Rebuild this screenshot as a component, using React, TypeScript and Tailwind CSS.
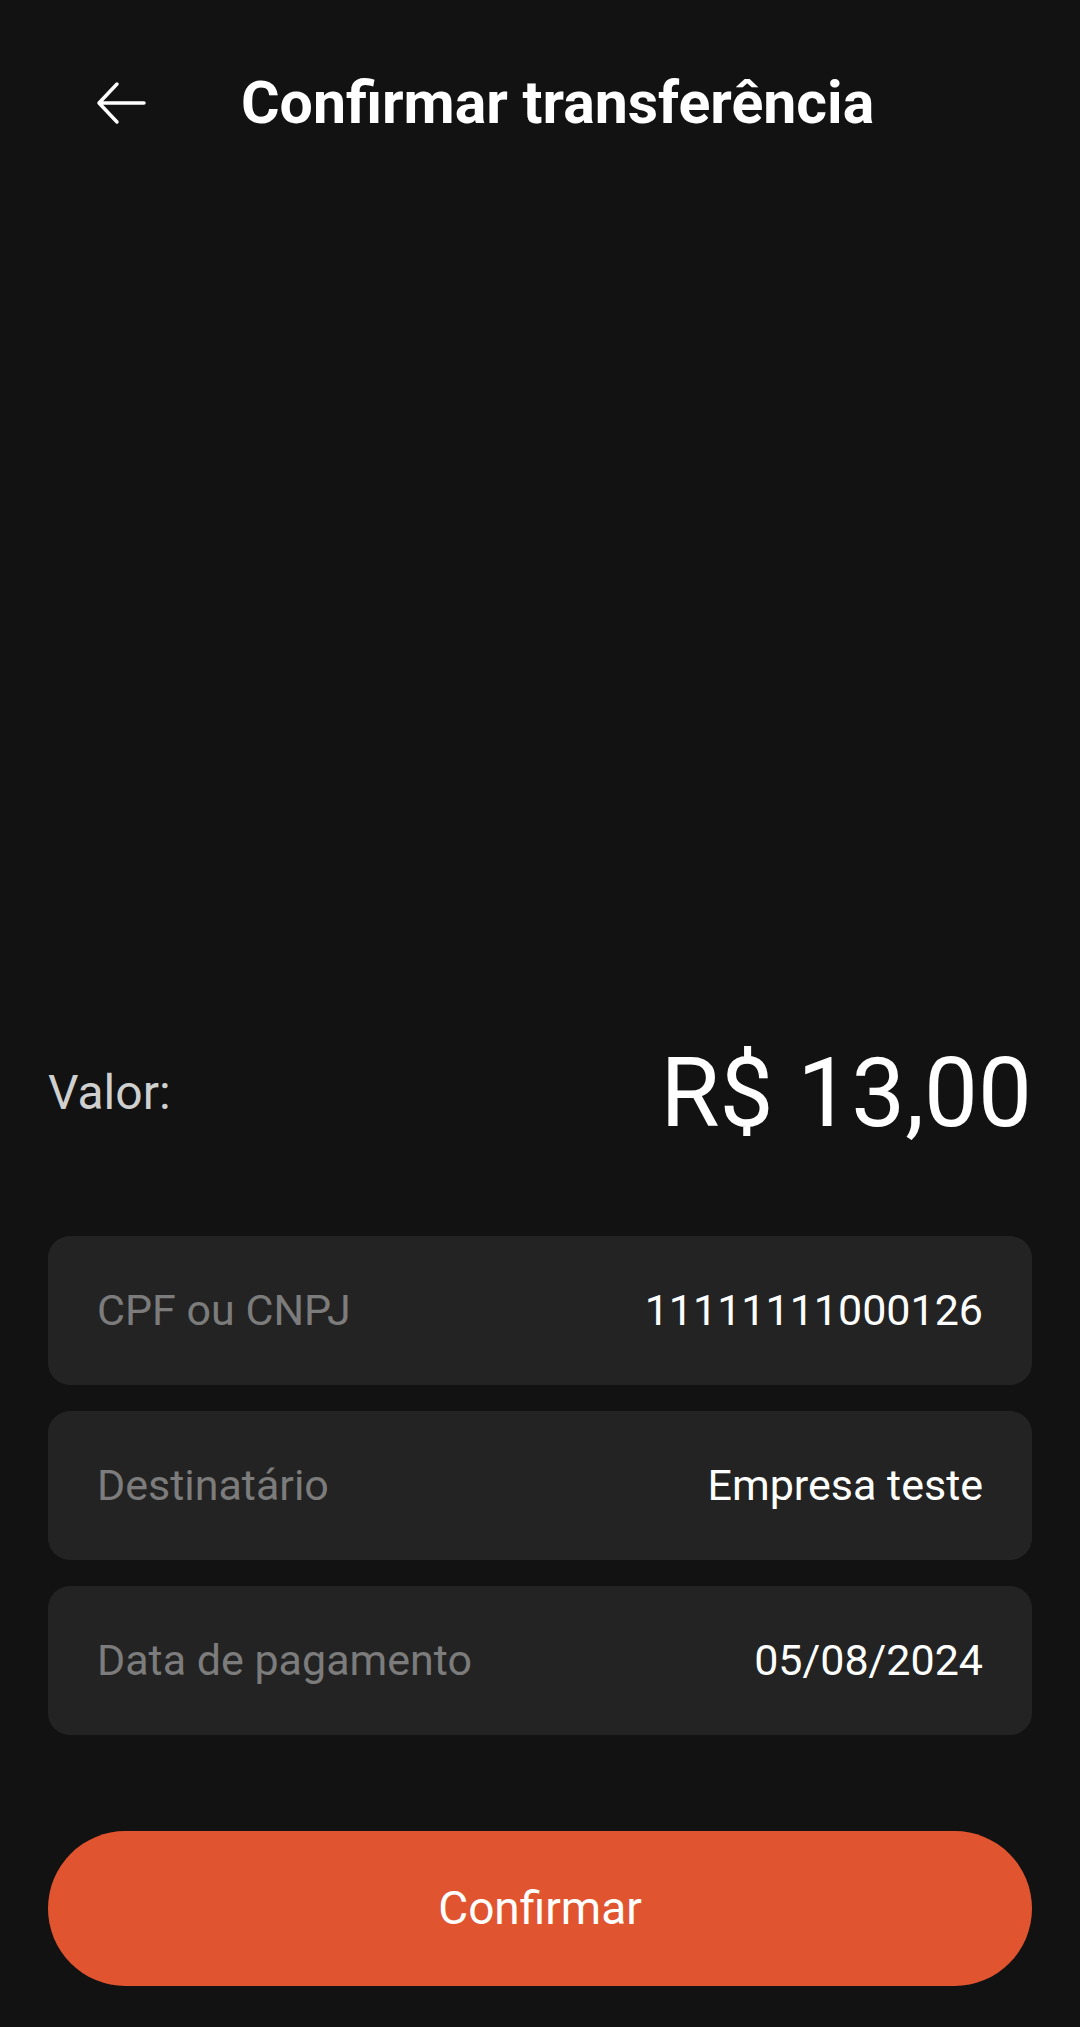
const ROWS = [
  { label: 'CPF ou CNPJ', value: '11111111000126' },
  { label: 'Destinatário', value: 'Empresa teste' },
  { label: 'Data de pagamento', value: '05/08/2024' },
];

function BackArrow() {
  return (
    <svg width="50" height="44" viewBox="0 0 50 44" fill="none">
      <path
        d="M3 22h45M21 3L3 22l18 19"
        stroke="white"
        strokeWidth="3.5"
        strokeLinecap="round"
        strokeLinejoin="round"
      />
    </svg>
  );
}

export default function App() {
  return (
    <div
      className="min-h-screen flex flex-col bg-[#121212] text-white px-[48px] pb-[41px]"
      style={{ fontFamily: 'Roboto, "Noto Sans", sans-serif' }}
    >
      {/* Header */}
      <header className="flex items-center h-[70px] mt-[68px]">
        <button className="ml-[48px] flex items-center" aria-label="Voltar">
          <BackArrow />
        </button>
        <h1 className="ml-[95px] text-[59px] font-bold leading-[70px]">
          Confirmar transferência
        </h1>
      </header>

      <div className="flex-1" />

      {/* Valor */}
      <div className="flex items-center justify-between h-[140px] mb-[73px]">
        <span className="text-[48px] text-[#cfcfcf] leading-none">Valor:</span>
        <span className="text-[96px] leading-none">R$ 13,00</span>
      </div>

      {/* Details */}
      <div className="flex flex-col gap-[26px]">
        {ROWS.map((row) => (
          <div
            key={row.label}
            className="h-[149px] rounded-[22px] bg-[#232323] flex items-center justify-between px-[49px]"
          >
            <span className="text-[43px] text-[#7c7c7c]">{row.label}</span>
            <span className="text-[43px] text-white">{row.value}</span>
          </div>
        ))}
      </div>

      <button className="mt-[96px] h-[155px] rounded-full bg-[#e0552f] text-white text-[46px]">
        Confirmar
      </button>
    </div>
  );
}
